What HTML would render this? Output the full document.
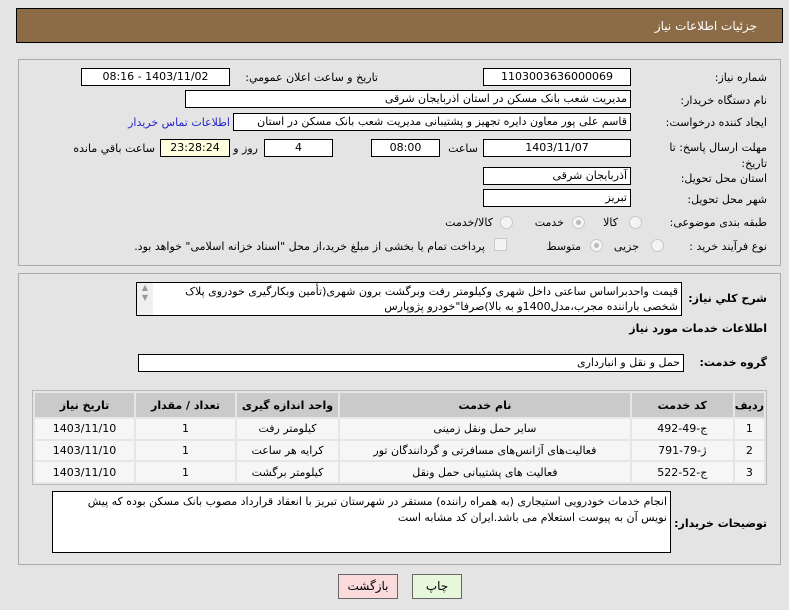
<!DOCTYPE html>
<html><head><meta charset="utf-8"><style>
*{margin:0;padding:0;box-sizing:border-box}
body{width:789px;height:610px;background:#e4e4e4;font-family:"DejaVu Sans","Liberation Sans",sans-serif;font-size:11px;color:#000;position:relative;overflow:hidden;direction:rtl}
.a{position:absolute;white-space:nowrap}
.in{position:absolute;background:#fff;border:1px solid #000;padding:0 3px;line-height:15px;white-space:nowrap;overflow:hidden}
.c{text-align:center}
.lb{position:absolute;white-space:nowrap;text-align:right}
.b{font-weight:bold;font-size:11px}
.rad{position:absolute;width:13px;height:13px;border-radius:50%;border:1px solid #c8c8c8;background:#f4f4f4}
.rad.on:after{content:"";position:absolute;left:3px;top:3px;width:5px;height:5px;border-radius:50%;background:#bbb}
table{position:absolute;left:32px;top:390px;width:735px;height:95px;border:1px solid #b8b8b8;border-spacing:2px;background:#e6e6e6;direction:rtl}
td,th{text-align:center;background:#f6f6f6;font-size:11px;font-weight:normal}
th{background:#cacaca;font-weight:bold;height:24px}
</style></head><body>
<div class="a" style="left:16px;top:8px;width:767px;height:35px;background:#8c6b47;border:1px solid #000"></div>
<div class="a" style="right:32px;top:19px;color:#fff;font-size:12px">جزئیات اطلاعات نیاز</div>

<div class="a" style="left:18px;top:59px;width:763px;height:207px;border:1px solid #aaa"></div>
<div class="lb" style="right:22px;top:71px">شماره نیاز:</div>
<div class="in c" style="left:483px;top:68px;width:148px;height:18px">1103003636000069</div>
<div class="lb" style="right:411px;top:71px">تاريخ و ساعت اعلان عمومي:</div>
<div class="in c" style="left:81px;top:68px;width:149px;height:18px">1403/11/02 - 08:16</div>

<div class="lb" style="right:22px;top:94px">نام دستگاه خریدار:</div>
<div class="in" style="left:185px;top:90px;width:446px;height:18px">مدیریت شعب بانک مسکن در استان اذربایجان شرقی</div>

<div class="lb" style="right:22px;top:116px">ایجاد کننده درخواست:</div>
<div class="in" style="left:233px;top:113px;width:398px;height:18px;direction:rtl">قاسم علی پور معاون دایره تجهیز و پشتیبانی مدیریت شعب بانک مسکن در استان</div>
<div class="lb" style="right:559px;top:116px;color:#2424d0">اطلاعات تماس خریدار</div>

<div class="lb" style="right:22px;top:140px;line-height:16px">مهلت ارسال پاسخ: تا<br>تاریخ:</div>
<div class="in c" style="left:483px;top:139px;width:148px;height:18px">1403/11/07</div>
<div class="lb" style="right:311px;top:142px">ساعت</div>
<div class="in c" style="left:371px;top:139px;width:69px;height:18px">08:00</div>
<div class="in c" style="left:264px;top:139px;width:69px;height:18px">4</div>
<div class="lb" style="right:531px;top:142px">روز و</div>
<div class="in c" style="left:160px;top:139px;width:70px;height:18px;background:#ffffe0">23:28:24</div>
<div class="lb" style="right:634px;top:142px">ساعت باقي مانده</div>

<div class="lb" style="right:22px;top:172px">استان محل تحویل:</div>
<div class="in" style="left:483px;top:167px;width:148px;height:18px">آذربایجان شرقی</div>
<div class="lb" style="right:22px;top:193px">شهر محل تحویل:</div>
<div class="in" style="left:483px;top:189px;width:148px;height:18px">تبریز</div>

<div class="lb" style="right:22px;top:216px">طبقه بندی موضوعی:</div>
<div class="rad" style="left:629px;top:216px"></div><div class="lb" style="right:171px;top:216px">کالا</div>
<div class="rad on" style="left:572px;top:216px"></div><div class="lb" style="right:225px;top:216px">خدمت</div>
<div class="rad" style="left:500px;top:216px"></div><div class="lb" style="right:296px;top:216px">کالا/خدمت</div>

<div class="lb" style="right:22px;top:240px">نوع فرآیند خرید :</div>
<div class="rad" style="left:651px;top:239px"></div><div class="lb" style="right:150px;top:240px">جزیی</div>
<div class="rad on" style="left:590px;top:239px"></div><div class="lb" style="right:208px;top:240px">متوسط</div>
<div class="a" style="left:494px;top:238px;width:13px;height:13px;border:1px solid #c8c8c8;background:#f4f4f4"></div>
<div class="lb" style="right:304px;top:240px">پرداخت تمام یا بخشی از مبلغ خرید،از محل "اسناد خزانه اسلامی" خواهد بود.</div>

<div class="a" style="left:18px;top:273px;width:763px;height:292px;border:1px solid #aaa"></div>
<div class="lb b" style="right:22px;top:292px">شرح کلي نیاز:</div>
<div class="in" style="left:136px;top:282px;width:546px;height:34px;line-height:15px;padding:1px 3px 0 20px;white-space:normal;text-align:right">قیمت واحدبراساس ساعتی داخل شهری وکیلومتر رفت وبرگشت برون شهری(تأمین وبکارگیری خودروی پلاک شخصی باراننده مجرب،مدل1400و به بالا)صرفا"خودرو پژوپارس</div>
<div class="a" style="left:137px;top:283px;width:16px;height:32px;background:#f0f0f0;color:#999;font-size:8px;text-align:center;line-height:10px">▲<br>▼</div>
<div class="lb b" style="right:22px;top:322px">اطلاعات خدمات مورد نیاز</div>
<div class="lb b" style="right:22px;top:356px">گروه خدمت:</div>
<div class="in" style="left:138px;top:354px;width:546px;height:18px">حمل و نقل و انبارداری</div>

<table>
<tr><th style="width:26px">ردیف</th><th style="width:101px">کد خدمت</th><th>نام خدمت</th><th style="width:101px">واحد اندازه گیری</th><th style="width:99px">تعداد / مقدار</th><th style="width:99px">تاریخ نیاز</th></tr>
<tr><td>1</td><td>ج-49-492</td><td>سایر حمل ونقل زمینی</td><td>کیلومتر رفت</td><td>1</td><td>1403/11/10</td></tr>
<tr><td>2</td><td>ژ-79-791</td><td>فعالیت‌های آژانس‌های مسافرتی و گردانندگان تور</td><td>کرایه هر ساعت</td><td>1</td><td>1403/11/10</td></tr>
<tr><td>3</td><td>ج-52-522</td><td>فعالیت های پشتیبانی حمل ونقل</td><td>کیلومتر برگشت</td><td>1</td><td>1403/11/10</td></tr>
</table>

<div class="lb b" style="right:22px;top:517px">توضیحات خریدار:</div>
<div class="in" style="left:52px;top:491px;width:619px;height:62px;line-height:16px;padding:2px 3px 0 20px;white-space:normal;text-align:right">انجام خدمات خودرویی استیجاری (به همراه راننده) مستقر در شهرستان تبریز با انعقاد قرارداد مصوب بانک مسکن بوده که پیش نویس آن به پیوست استعلام می باشد.ایران کد مشابه است</div>

<div class="a c" style="left:338px;top:574px;width:60px;height:25px;background:#fadada;border:1px solid #666;line-height:23px;font-size:12px">بازگشت</div>
<div class="a c" style="left:412px;top:574px;width:50px;height:25px;background:#e6f7dc;border:1px solid #666;line-height:23px;font-size:12px">چاپ</div>
</body></html>
